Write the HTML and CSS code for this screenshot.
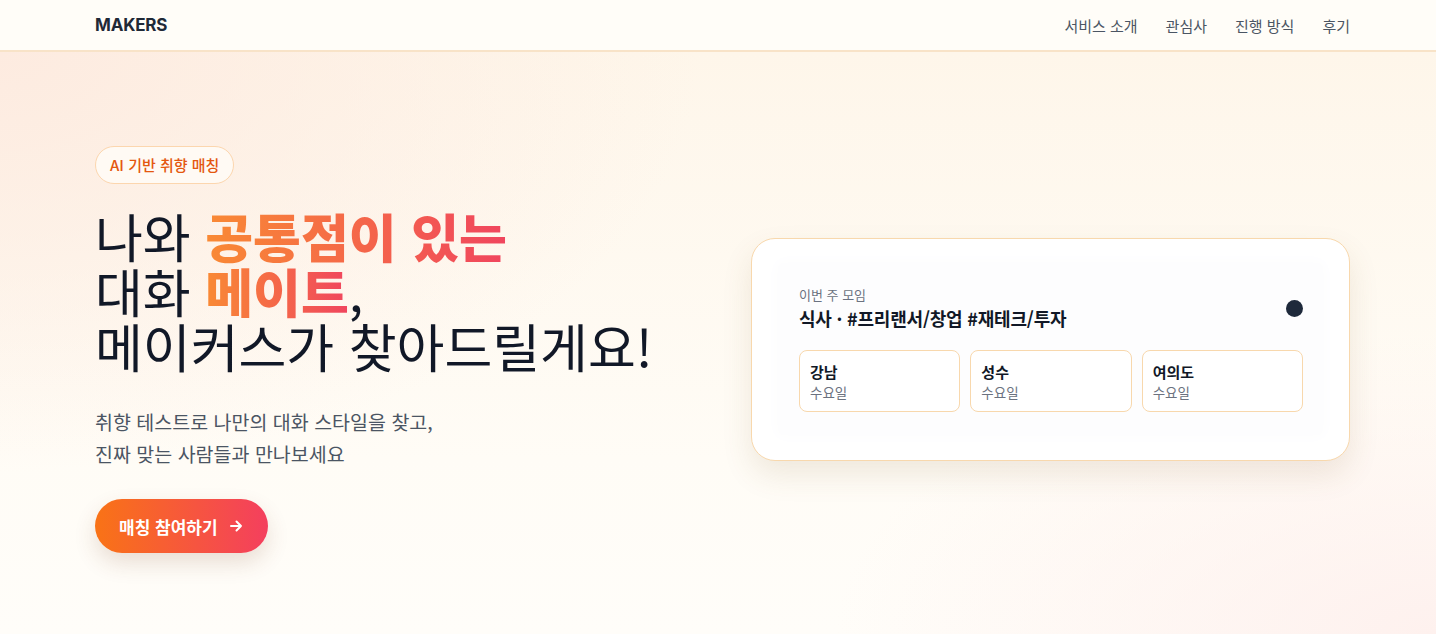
FILE: index.html
```html
<!DOCTYPE html>
<html lang="ko">
<head>
<meta charset="utf-8">
<title>MAKERS</title>
<link rel="stylesheet" href="styles.css">
</head>
<body>
<header class="site-header">
  <div class="header-inner">
    <div class="logo">MAKERS</div>
    <nav class="nav">
      <a href="#">서비스 소개</a>
      <a href="#">관심사</a>
      <a href="#">진행 방식</a>
      <a href="#">후기</a>
    </nav>
  </div>
</header>
<main class="hero">
  <div class="hero-inner">
    <section class="hero-left">
      <span class="badge">AI 기반 취향 매칭</span>
      <h1 class="headline">나와 <span class="grad">공통점이 있는</span><br>대화 <span class="grad">메이트</span>,<br>메이커스가 찾아드릴게요!</h1>
      <p class="sub">취향 테스트로 나만의 대화 스타일을 찾고,<br>진짜 맞는 사람들과 만나보세요</p>
      <a class="cta" href="#">매칭 참여하기
        <svg width="16" height="16" viewBox="0 0 16 16" fill="none" stroke="#fff" stroke-width="2" stroke-linecap="round" stroke-linejoin="round"><path d="M3 8h10M8.5 3.5 13 8l-4.5 4.5"/></svg>
      </a>
    </section>
    <section class="hero-right">
      <div class="card">
        <div class="panel">
          <div class="panel-head">
            <div>
              <div class="label">이번 주 모임</div>
              <div class="title">식사 · #프리랜서/창업 #재테크/투자</div>
            </div>
            <span class="dot"></span>
          </div>
          <div class="places">
            <div class="place"><div class="pname">강남</div><div class="pday">수요일</div></div>
            <div class="place"><div class="pname">성수</div><div class="pday">수요일</div></div>
            <div class="place"><div class="pname">여의도</div><div class="pday">수요일</div></div>
          </div>
        </div>
      </div>
    </section>
  </div>
</main>
</body>
</html>
```

FILE: styles.css
```css
* { box-sizing: border-box; }
html, body { margin: 0; padding: 0; }
body {
  font-family: "Noto Sans CJK KR", "Noto Sans", sans-serif;
  color: #111827;
  width: 1436px;
  height: 634px;
  overflow: hidden;
  background: #fffdf8;
}
a { text-decoration: none; color: inherit; }

.site-header {
  height: 52px;
  background: #fffdf8;
  border-bottom: 2px solid #f8e3c8;
}
.header-inner {
  height: 100%;
  padding: 0 86px 0 95px;
  display: flex;
  align-items: center;
  justify-content: space-between;
}
.logo {
  font-family: Inter, "Noto Sans", sans-serif;
  font-weight: 700;
  font-size: 17px;
  color: #1f2937;
  letter-spacing: -0.2px;
}
.nav { display: flex; gap: 28px; }
.nav a { font-size: 15px; color: #4b5563; }

.hero {
  height: 582px;
  background:
    radial-gradient(ellipse 700px 420px at 0% 0%, #fdebe0 0%, rgba(253,235,224,0) 100%),
    radial-gradient(ellipse 600px 300px at 100% 100%, #fef1ee 0%, rgba(254,241,238,0) 100%),
    linear-gradient(180deg, #fef6ea 0%, #fffcf6 70%, #fffdf9 100%);
}
.hero-inner {
  padding: 94px 86px 0 95px;
  display: flex;
  align-items: center;
  justify-content: space-between;
}
.hero-left { display: flex; flex-direction: column; align-items: flex-start; }
.badge {
  display: inline-block;
  height: 38px;
  line-height: 36px;
  padding: 0 14px;
  border: 1px solid #fcd6ae;
  border-radius: 999px;
  background: #fffaf4;
  color: #e4570f;
  font-size: 15px;
  font-weight: 500;
}
.headline {
  margin: 24px 0 0;
  font-size: 52px;
  line-height: 55px;
  font-weight: 400;
  color: #111827;
  letter-spacing: 0;
}
.grad {
  font-weight: 800;
  background: linear-gradient(90deg, #f98a34 0%, #f0455e 100%);
  -webkit-background-clip: text;
  background-clip: text;
  color: transparent;
}
.sub {
  margin: 33px 0 0;
  font-size: 19.5px;
  line-height: 32px;
  color: #4b5563;
}
.cta {
  margin-top: 29px;
  height: 54px;
  padding: 0 24px;
  border-radius: 999px;
  display: inline-flex;
  align-items: center;
  gap: 10px;
  color: #fff;
  font-size: 17px;
  font-weight: 700;
  background: linear-gradient(90deg, #f97316 0%, #f43f5e 100%);
  box-shadow: 0 10px 22px rgba(120, 60, 30, 0.16);
}

.card {
  width: 599px;
  padding: 24px 26px 25px;
  background: #fff;
  border: 1px solid #f8d8ad;
  border-radius: 24px;
  box-shadow: 0 14px 30px rgba(120, 90, 40, 0.12);
}
.panel {
  padding: 23px 20px 23px 21px;
  background: #fdfdfe;
  border-radius: 6px;
  box-shadow: 0 0 14px 4px #fdfdfe;
}
.panel-head {
  display: flex;
  align-items: center;
  justify-content: space-between;
}
.label { font-size: 13px; line-height: 18px; color: #6b7280; }
.title { margin-top: 1px; font-size: 18px; line-height: 26px; font-weight: 700; color: #111827; letter-spacing: -0.2px; }
.dot {
  width: 17px; height: 17px;
  border-radius: 50%;
  background: #1e293b;
}
.places {
  margin-top: 19px;
  display: grid;
  grid-template-columns: repeat(3, 1fr);
  gap: 10px;
}
.place {
  height: 62px;
  padding: 10px 10px;
  border: 1px solid #f8d8ad;
  border-radius: 8px;
  background: #fff;
}
.pname { font-size: 15px; line-height: 21px; font-weight: 700; color: #111827; }
.pday { font-size: 13.5px; line-height: 20px; color: #6b7280; }
```
